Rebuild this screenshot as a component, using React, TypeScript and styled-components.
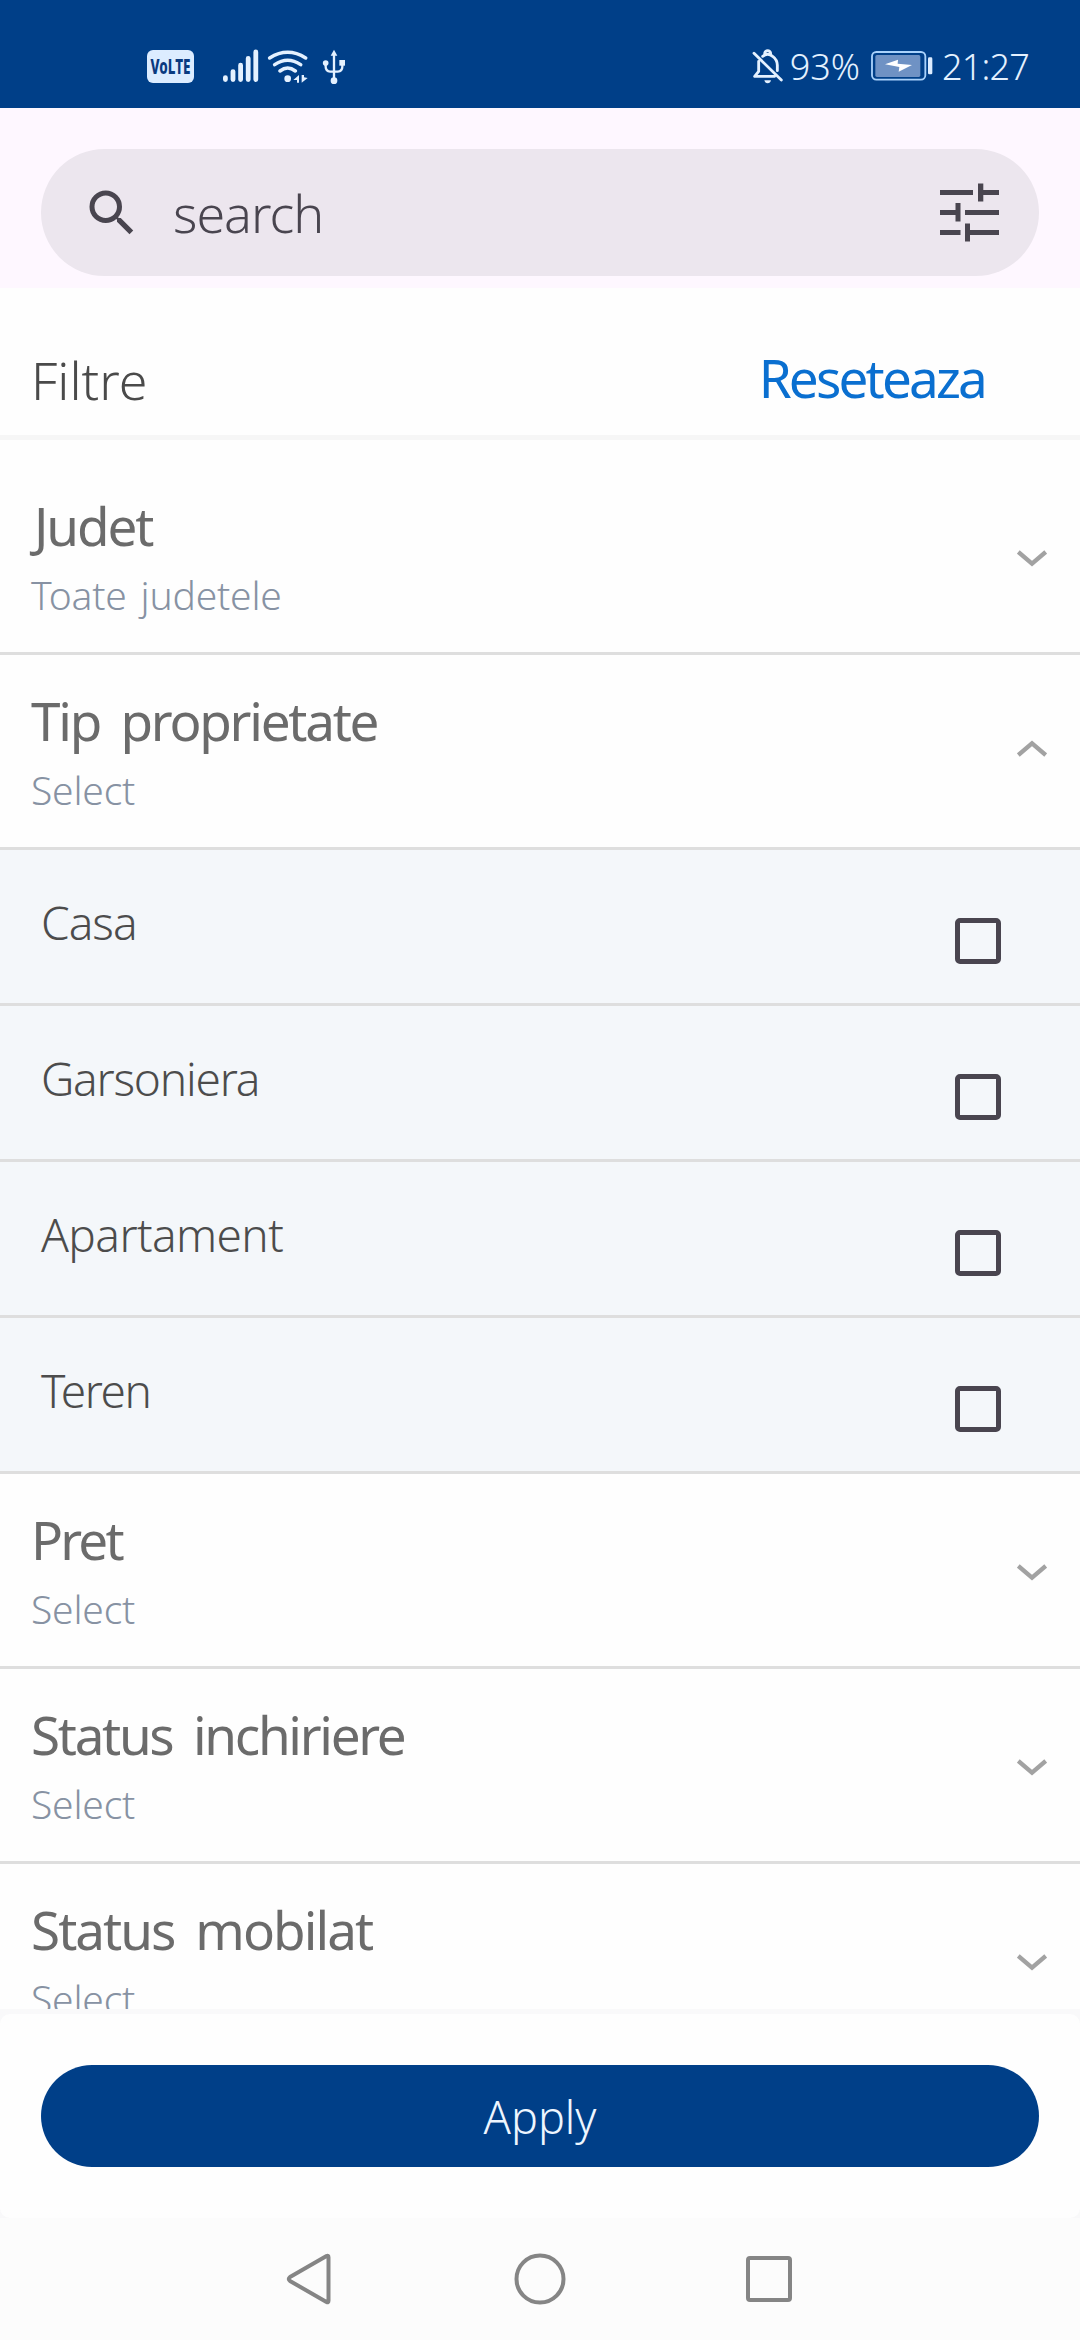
import React from "react";
import styled, { createGlobalStyle } from "styled-components";
import { MdSearch } from "react-icons/md";

const GlobalStyle = createGlobalStyle`
  *, *::before, *::after { box-sizing: border-box; }
  body { margin: 0; background: #fefefe; font-family: "Noto Sans", "Open Sans", sans-serif; }
  button { font: inherit; border: 0; background: none; padding: 0; text-align: left; }
  svg { display: block; flex: none; }
`;

const Screen = styled.div`
  width: 1080px;
  height: 2340px;
  display: flex;
  flex-direction: column;
  background: #fefefe;
  overflow: hidden;
`;

/* Status bar */
const StatusBar = styled.header`
  height: 108px;
  flex: none;
  display: flex;
  align-items: center;
  justify-content: space-between;
  padding: 24px 51px 0 147px;
  background: #003f88;
  color: #e4f1ff;
`;
const StatusGroup = styled.div`
  display: flex;
  align-items: center;
`;
const Spacer = styled.span<{ $w: number }>`
  width: ${(p) => p.$w}px;
  flex: none;
`;
const StatusText = styled.span<{ $spacing?: number }>`
  padding-top: 1px;
  font-size: 36px;
  line-height: 48px;
  font-weight: 300;
  letter-spacing: ${(p) => p.$spacing ?? 0}px;
  white-space: nowrap;
`;

/* Search */
const SearchHeader = styled.div`
  height: 180px;
  flex: none;
  padding: 41px 41px 0;
  background: #fef7ff;
`;
const SearchPill = styled.div`
  height: 127px;
  display: flex;
  align-items: center;
  padding: 0 40px 0 41px;
  border-radius: 64px;
  background: #ece6ee;
  color: #49454f;
`;
const SearchText = styled.span`
  flex: 1;
  padding-left: 31px;
  font-size: 52px;
  line-height: 60px;
  font-weight: 300;
  letter-spacing: -1px;
`;

/* Filter title row */
const FilterHeader = styled.div`
  height: 152px;
  flex: none;
  display: flex;
  justify-content: space-between;
  padding: 62px 95px 0 31px;
  border-bottom: 5px solid #f6f6f6;
`;
const FilterTitle = styled.h1`
  margin: 0;
  font-size: 52px;
  line-height: 60px;
  font-weight: 300;
  color: #4a4a4a;
`;
const ResetButton = styled.button`
  height: 60px;
  margin-top: -2px;
  font-size: 53px;
  line-height: 60px;
  letter-spacing: -2.8px;
  color: #0a6fd0;
`;

/* Sections */
const FilterList = styled.main`
  height: 1569px;
  flex: none;
  padding-top: 20px;
  overflow: hidden;
`;
const SectionHeader = styled.div`
  height: 195px;
  display: flex;
  justify-content: space-between;
  padding: 36px 33px 0 31px;
  border-bottom: 3px solid #dedede;
`;
const SectionLabels = styled.div`
  display: flex;
  flex-direction: column;
  gap: 14px;
`;
const SectionTitle = styled.h2<{ $spacing: number; $indent: number }>`
  margin: 0;
  padding-left: ${(p) => p.$indent}px;
  font-size: 53px;
  line-height: 60px;
  font-weight: 400;
  letter-spacing: ${(p) => p.$spacing}px;
  word-spacing: 9px;
  color: #6b6b6b;
`;
const SectionValue = styled.span`
  font-size: 39px;
  line-height: 50px;
  font-weight: 300;
  word-spacing: 4px;
  letter-spacing: -0.2px;
  color: #8792a3;
`;
const ChevronSlot = styled.div<{ $open: boolean }>`
  padding-top: ${(p) => (p.$open ? 49 : 54)}px;
  svg { transform: ${(p) => (p.$open ? "scaleY(-1)" : "none")}; }
`;

const OptionRow = styled.label`
  height: 156px;
  display: flex;
  justify-content: space-between;
  padding: 42px 79px 0 41px;
  background: #f4f7fa;
  border-bottom: 3px solid #dedede;
`;
const OptionText = styled.span<{ $spacing: number }>`
  font-size: 46px;
  line-height: 60px;
  font-weight: 300;
  letter-spacing: ${(p) => p.$spacing}px;
  color: #4c4c4c;
`;
const CheckBox = styled.span`
  width: 46px;
  height: 46px;
  margin-top: 26px;
  border: 5px solid #49454f;
  border-radius: 5px;
`;

/* Footer */
const Footer = styled.footer`
  height: 209px;
  flex: none;
  padding-top: 5px;
  background: #f9f9fa;
`;
const FooterCard = styled.div`
  height: 204px;
  padding: 51px 41px 0;
  background: #fefefe;
  border-radius: 10px;
`;
const ApplyButton = styled.button`
  width: 100%;
  height: 102px;
  padding-top: 2px;
  border-radius: 51px;
  background: #003f88;
  color: #eef6ff;
  font-size: 45px;
  line-height: 60px;
  font-weight: 300;
  text-align: center;
`;

const NavBar = styled.nav`
  flex: 1;
  display: flex;
  align-items: center;
  padding-left: 286px;
  background: #fcfcfc;
`;

const VolteBadge = () => (
  <svg width="47" height="33" viewBox="0 0 47 33">
    <rect width="47" height="33" rx="6" fill="#dcecff" />
    <text x="3.5" y="24" fontFamily='"Noto Sans", sans-serif' fontWeight="800" fontSize="21"
      textLength="40" lengthAdjust="spacingAndGlyphs" fill="#0a3a80">VoLTE</text>
  </svg>
);

const SignalIcon = () => (
  <svg width="36" height="34" viewBox="0 0 36 34" stroke="#e4f1ff" strokeWidth="4.8" strokeLinecap="round">
    <path d="M2.4 28.6V30.6M10 22.6V30.6M17.6 16.2V30.6M25.2 9.4V30.6M32.8 3V30.6" />
  </svg>
);

const WifiIcon = () => (
  <svg width="42" height="35" viewBox="410 55 126 105" fill="none" stroke="#e4f1ff" strokeWidth="10.5" strokeLinecap="round">
    <path d="M418 82Q472 48 526 82M433 102Q472 75 511 102M449 121Q472 103 495 121" />
    <circle cx="472" cy="144" r="10" fill="#e4f1ff" stroke="none" />
    <path d="M506 133V156H500V148H489ZM514 133V156L532 142L521 140V133Z" fill="#e4f1ff" stroke="none" />
  </svg>
);

const UsbIcon = () => (
  <svg width="24" height="35" viewBox="575 55 72 105" fill="none" stroke="#e4f1ff" strokeWidth="7">
    <path d="M611 70V150M586 98V108Q586 121 600 123H611M636 96V108Q636 121 622 123H611" />
    <path d="M601 75L611 57L621 75Z" fill="#e4f1ff" stroke="none" />
    <circle cx="586" cy="97" r="8.5" fill="#e4f1ff" stroke="none" />
    <rect x="627" y="88" width="17" height="17" fill="#e4f1ff" stroke="none" />
    <circle cx="611" cy="150" r="10" fill="#e4f1ff" stroke="none" />
  </svg>
);

const BellOffIcon = () => (
  <svg width="32" height="35" viewBox="60 57 96 105" fill="none" stroke="#e4f1ff" strokeWidth="8.5" strokeLinecap="round" strokeLinejoin="round">
    <path d="M66 70L148 150M80 94V124L68 139H128M92 79Q107 67 122 79Q136 89 136 106V122" />
    <path d="M98 70Q100 62 107 62Q114 62 116 70" />
    <path d="M97 151H117Q115 160 107 160Q99 160 97 151Z" fill="#e4f1ff" stroke="none" />
  </svg>
);

const BatteryIcon = () => (
  <svg width="62" height="30" viewBox="417 65 186 90">
    <rect x="420" y="68" width="160" height="83" rx="13" fill="none" stroke="#a9d2fb" strokeWidth="5.5" />
    <rect x="430" y="77" width="135" height="66" rx="5" fill="#6f92c4" />
    <rect x="588" y="84" width="13" height="51" rx="4" fill="#dcecff" />
    <path d="M459 105L498 91L497 103L540 107L500 127L502 113Z" fill="#fff" />
  </svg>
);

const TuneIcon = () => (
  <svg width="59" height="59" viewBox="0 0 59 59" fill="#49454f">
    <path d="M0 7H33V12H0ZM38 0.5H43.3V7H59V12H43.3V18.5H38ZM0 27H15.5V20H20.5V38.5H15.5V32H0ZM25 27H59V32H25ZM0 47H20.5V52H0ZM25 40.5H30V47H59V52H30V58.5H25Z" />
  </svg>
);

const Chevron = () => (
  <svg width="30" height="17" viewBox="0 0 30 17" fill="none" stroke="#a2a2a2" strokeWidth="4.3">
    <path d="M1.3 2L15 13.6L28.7 2" />
  </svg>
);

type SectionProps = { title: string; value: string; spacing: number; indent?: number; open?: boolean };
const Section = ({ title, value, spacing, indent = 0, open = false }: SectionProps) => (
  <SectionHeader>
    <SectionLabels>
      <SectionTitle $spacing={spacing} $indent={indent}>{title}</SectionTitle>
      <SectionValue>{value}</SectionValue>
    </SectionLabels>
    <ChevronSlot $open={open}><Chevron /></ChevronSlot>
  </SectionHeader>
);

const options = [
  { label: "Casa", spacing: -1 },
  { label: "Garsoniera", spacing: -1.2 },
  { label: "Apartament", spacing: -0.6 },
  { label: "Teren", spacing: -1.4 },
];

export default function App() {
  return (
    <Screen>
      <GlobalStyle />
      <StatusBar>
        <StatusGroup>
          <VolteBadge />
          <Spacer $w={29} />
          <SignalIcon />
          <Spacer $w={8} />
          <WifiIcon />
          <Spacer $w={13} />
          <UsbIcon />
        </StatusGroup>
        <StatusGroup>
          <BellOffIcon />
          <Spacer $w={6} />
          <StatusText>93%</StatusText>
          <Spacer $w={11} />
          <BatteryIcon />
          <Spacer $w={9} />
          <StatusText $spacing={-0.8}>21:27</StatusText>
        </StatusGroup>
      </StatusBar>

      <SearchHeader>
        <SearchPill>
          <MdSearch size={60} />
          <SearchText>search</SearchText>
          <TuneIcon />
        </SearchPill>
      </SearchHeader>

      <FilterHeader>
        <FilterTitle>Filtre</FilterTitle>
        <ResetButton>Reseteaza</ResetButton>
      </FilterHeader>

      <FilterList>
        <Section title="Judet" value="Toate judetele" spacing={-2.1} indent={3} />
        <Section title="Tip proprietate" value="Select" spacing={-2.25} open />
        {options.map((o) => (
          <OptionRow key={o.label}>
            <OptionText $spacing={o.spacing}>{o.label}</OptionText>
            <CheckBox />
          </OptionRow>
        ))}
        <Section title="Pret" value="Select" spacing={-2.8} />
        <Section title="Status inchiriere" value="Select" spacing={-2.3} />
        <Section title="Status mobilat" value="Select" spacing={-1.95} />
      </FilterList>

      <Footer>
        <FooterCard>
          <ApplyButton>Apply</ApplyButton>
        </FooterCard>
      </Footer>

      <NavBar>
        <svg width="46" height="52" viewBox="0 0 46 52" fill="none" stroke="#858585" strokeWidth="4" strokeLinejoin="round">
          <path d="M40.500 3Q42.500 2 42.500 4.500V47.500Q42.500 50 40.500 49L4 28Q1.500 26 4 24Z" />
        </svg>
        <Spacer $w={182} />
        <svg width="52" height="52" viewBox="0 0 52 52" fill="none" stroke="#858585" strokeWidth="4">
          <circle cx="26" cy="26" r="23.500" />
        </svg>
        <Spacer $w={180} />
        <svg width="46" height="46" viewBox="0 0 46 46" fill="none" stroke="#858585" strokeWidth="4">
          <rect x="2" y="2" width="42" height="42" rx="2" />
        </svg>
      </NavBar>
    </Screen>
  );
}
